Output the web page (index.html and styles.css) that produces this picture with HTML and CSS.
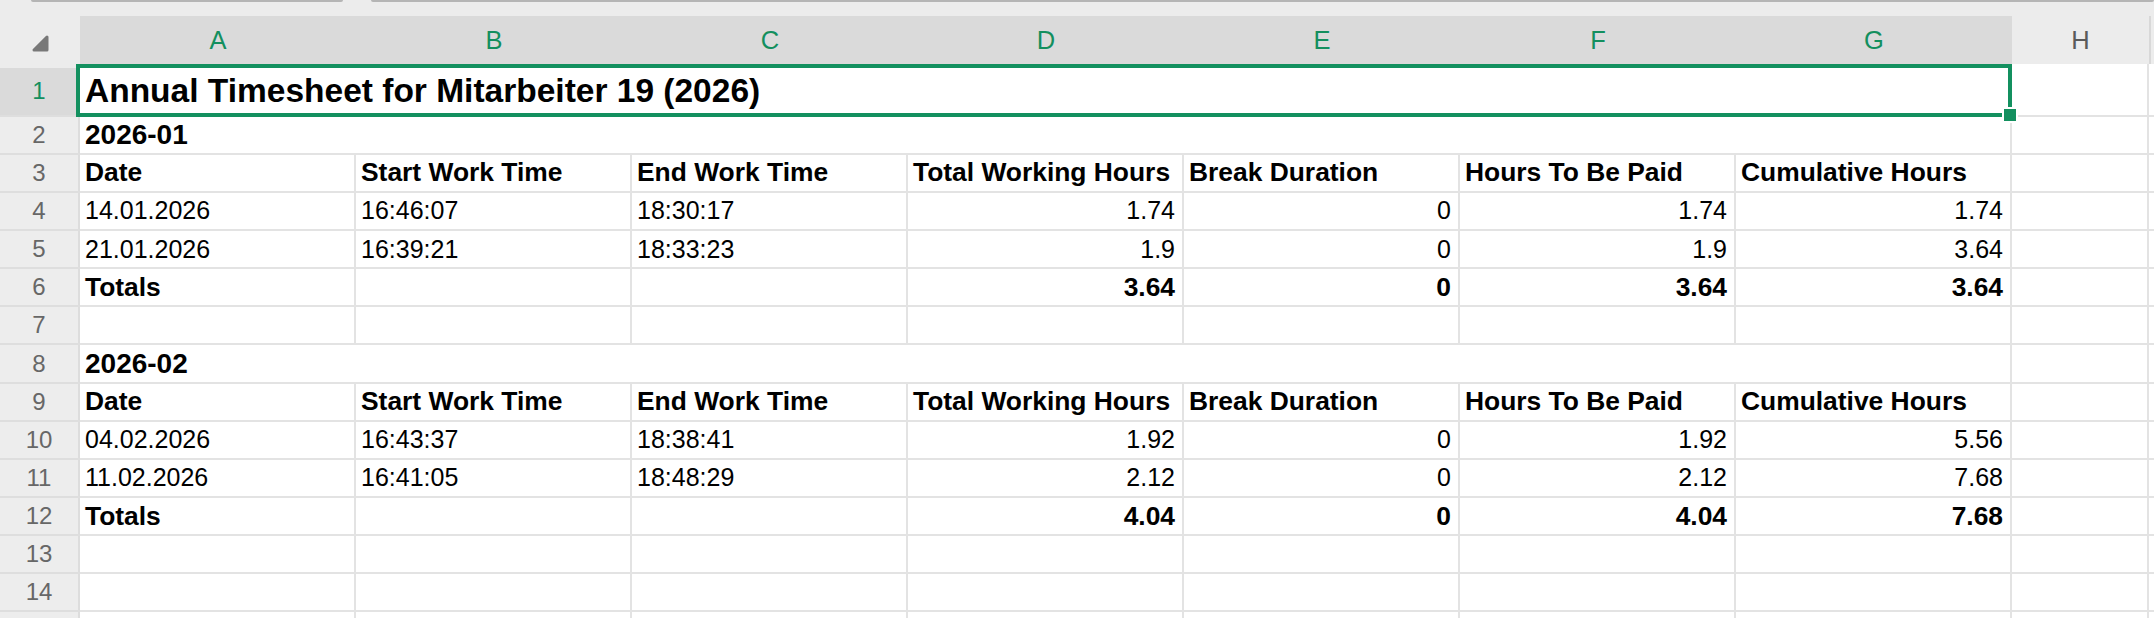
FILE: index.html
```html
<!DOCTYPE html>
<html lang="en">
<head>
    <meta charset="UTF-8">
    <meta name="viewport" content="width=device-width, initial-scale=1.0">
    <title>Timesheet 2026</title>
    <link rel="stylesheet" href="styles.css">
</head>
<body>
    <div class="tabs">
        <div class="tab tab-first"></div>
        <div class="tab tab-rest"></div>
    </div>

    <div class="sheet">
        <div class="row head">
            <div class="corner">
                <svg width="80" height="48" viewBox="0 0 80 48"><polygon points="47,21 47,34 34,34" fill="#787878" stroke="#787878" stroke-width="3" stroke-linejoin="round"/></svg>
            </div>
            <div class="col sel">A</div>
            <div class="col sel">B</div>
            <div class="col sel">C</div>
            <div class="col sel">D</div>
            <div class="col sel">E</div>
            <div class="col sel">F</div>
            <div class="col sel">G</div>
            <div class="col">H</div>
            <div class="col last"></div>
        </div>

        <div class="row r1">
            <div class="num sel">1</div>
            <div class="cell wide title">
                Annual Timesheet for Mitarbeiter 19 (2026)
                <div class="selection"><span class="handle"></span></div>
            </div>
            <div class="cell"></div>
            <div class="cell"></div>
        </div>

        <div class="row">
            <div class="num">2</div>
            <div class="cell wide month">2026-01</div>
            <div class="cell"></div>
            <div class="cell"></div>
        </div>

        <div class="row bold">
            <div class="num">3</div>
            <div class="cell">Date</div>
            <div class="cell">Start Work Time</div>
            <div class="cell">End Work Time</div>
            <div class="cell">Total Working Hours</div>
            <div class="cell">Break Duration</div>
            <div class="cell">Hours To Be Paid</div>
            <div class="cell">Cumulative Hours</div>
            <div class="cell"></div>
            <div class="cell"></div>
        </div>

        <div class="row">
            <div class="num">4</div>
            <div class="cell">14.01.2026</div>
            <div class="cell">16:46:07</div>
            <div class="cell">18:30:17</div>
            <div class="cell n">1.74</div>
            <div class="cell n">0</div>
            <div class="cell n">1.74</div>
            <div class="cell n">1.74</div>
            <div class="cell"></div>
            <div class="cell"></div>
        </div>

        <div class="row">
            <div class="num">5</div>
            <div class="cell">21.01.2026</div>
            <div class="cell">16:39:21</div>
            <div class="cell">18:33:23</div>
            <div class="cell n">1.9</div>
            <div class="cell n">0</div>
            <div class="cell n">1.9</div>
            <div class="cell n">3.64</div>
            <div class="cell"></div>
            <div class="cell"></div>
        </div>

        <div class="row bold">
            <div class="num">6</div>
            <div class="cell">Totals</div>
            <div class="cell"></div>
            <div class="cell"></div>
            <div class="cell n">3.64</div>
            <div class="cell n">0</div>
            <div class="cell n">3.64</div>
            <div class="cell n">3.64</div>
            <div class="cell"></div>
            <div class="cell"></div>
        </div>

        <div class="row">
            <div class="num">7</div>
            <div class="cell"></div>
            <div class="cell"></div>
            <div class="cell"></div>
            <div class="cell"></div>
            <div class="cell"></div>
            <div class="cell"></div>
            <div class="cell"></div>
            <div class="cell"></div>
            <div class="cell"></div>
        </div>

        <div class="row">
            <div class="num">8</div>
            <div class="cell wide month">2026-02</div>
            <div class="cell"></div>
            <div class="cell"></div>
        </div>

        <div class="row bold">
            <div class="num">9</div>
            <div class="cell">Date</div>
            <div class="cell">Start Work Time</div>
            <div class="cell">End Work Time</div>
            <div class="cell">Total Working Hours</div>
            <div class="cell">Break Duration</div>
            <div class="cell">Hours To Be Paid</div>
            <div class="cell">Cumulative Hours</div>
            <div class="cell"></div>
            <div class="cell"></div>
        </div>

        <div class="row">
            <div class="num">10</div>
            <div class="cell">04.02.2026</div>
            <div class="cell">16:43:37</div>
            <div class="cell">18:38:41</div>
            <div class="cell n">1.92</div>
            <div class="cell n">0</div>
            <div class="cell n">1.92</div>
            <div class="cell n">5.56</div>
            <div class="cell"></div>
            <div class="cell"></div>
        </div>

        <div class="row">
            <div class="num">11</div>
            <div class="cell">11.02.2026</div>
            <div class="cell">16:41:05</div>
            <div class="cell">18:48:29</div>
            <div class="cell n">2.12</div>
            <div class="cell n">0</div>
            <div class="cell n">2.12</div>
            <div class="cell n">7.68</div>
            <div class="cell"></div>
            <div class="cell"></div>
        </div>

        <div class="row bold">
            <div class="num">12</div>
            <div class="cell">Totals</div>
            <div class="cell"></div>
            <div class="cell"></div>
            <div class="cell n">4.04</div>
            <div class="cell n">0</div>
            <div class="cell n">4.04</div>
            <div class="cell n">7.68</div>
            <div class="cell"></div>
            <div class="cell"></div>
        </div>

        <div class="row">
            <div class="num">13</div>
            <div class="cell"></div>
            <div class="cell"></div>
            <div class="cell"></div>
            <div class="cell"></div>
            <div class="cell"></div>
            <div class="cell"></div>
            <div class="cell"></div>
            <div class="cell"></div>
            <div class="cell"></div>
        </div>

        <div class="row">
            <div class="num">14</div>
            <div class="cell"></div>
            <div class="cell"></div>
            <div class="cell"></div>
            <div class="cell"></div>
            <div class="cell"></div>
            <div class="cell"></div>
            <div class="cell"></div>
            <div class="cell"></div>
            <div class="cell"></div>
        </div>

        <!-- next row, only its top edge shows -->
        <div class="row">
            <div class="num"></div>
            <div class="cell"></div>
            <div class="cell"></div>
            <div class="cell"></div>
            <div class="cell"></div>
            <div class="cell"></div>
            <div class="cell"></div>
            <div class="cell"></div>
            <div class="cell"></div>
            <div class="cell"></div>
        </div>
    </div>
</body>
</html>
```

FILE: styles.css
```css
* {
    margin: 0;
    padding: 0;
    box-sizing: border-box;
}

body {
    font-family: 'Liberation Sans', Arial, sans-serif;
    background: #ffffff;
    color: #000000;
    width: 2154px;
    height: 618px;
    overflow: hidden;
}

/* strip above the grid */
.tabs {
    height: 16px;
    background: #ececec;
    display: flex;
    gap: 28px;
    padding-left: 31px;
}

.tab {
    height: 2px;
    background: #b5b5b5;
    border-radius: 0 0 2px 2px;
}

.tab-first {
    width: 312px;
}

.tab-rest {
    flex: 1;
}

/* grid */
.row {
    display: grid;
    grid-template-columns: 80px repeat(7, 276px) 137px 1fr;
    height: 38.15px;
}

.head {
    height: 48px;
    background: #ececec;
}

.r1 {
    height: 52.6px;
}

.corner {
    display: flex;
}

.col {
    display: flex;
    align-items: center;
    justify-content: center;
    font-size: 25.5px;
    color: #5a5a5a;
}

.col.sel {
    background: #dadada;
    color: #138f5e;
}

.col.last {
    border-left: 2px solid #d8d8d8;
}

.num {
    display: flex;
    align-items: center;
    justify-content: center;
    background: #ededed;
    border-right: 2px solid #dddddd;
    border-bottom: 2px solid #dedede;
    font-size: 24px;
    color: #676767;
}

.num.sel {
    background: #dadada;
    border-top: 4px solid #ececec;
    color: #138f5e;
}

.cell {
    display: flex;
    align-items: center;
    padding: 0 7px 0 5px;
    border-right: 2px solid #e3e3e3;
    border-bottom: 2px solid #e3e3e3;
    font-size: 25px;
    white-space: nowrap;
}

.cell.n {
    justify-content: flex-end;
}

.bold .cell {
    font-weight: bold;
    font-size: 26.4px;
}

.wide {
    grid-column: span 7;
    font-weight: bold;
}

.title {
    position: relative;
    padding-top: 3px;
    font-size: 33.5px;
}

.month {
    font-size: 28px;
}

/* active cell outline */
.selection {
    position: absolute;
    left: -4px;
    right: -2px;
    top: 0;
    bottom: -2px;
    border: 4px solid #13905f;
}

.handle {
    position: absolute;
    right: -8px;
    bottom: -8px;
    width: 12px;
    height: 12px;
    background: #13905f;
    box-shadow: 0 0 0 2px #ffffff;
}
```
